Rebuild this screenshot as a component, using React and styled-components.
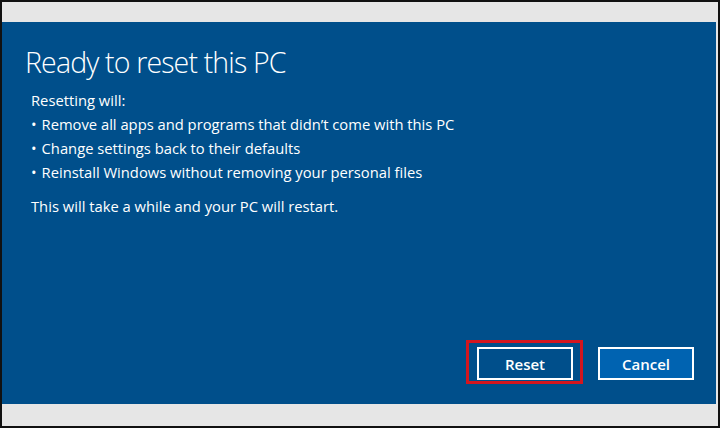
import React from 'react'
import styled, { createGlobalStyle } from 'styled-components'

const GlobalStyle = createGlobalStyle`
  html, body {
    margin: 0;
    padding: 0;
    background: #e6e6e6;
  }
  * {
    box-sizing: border-box;
  }
`

const Frame = styled.div`
  width: 720px;
  height: 428px;
  border: 2px solid #111;
  background: #e6e6e6;
  padding: 20px 2px 22px 0;
  font-family: 'Open Sans', 'Noto Sans', sans-serif;
`

const Dialog = styled.div`
  height: 100%;
  background: #004f8b;
  color: #fff;
  display: flex;
  flex-direction: column;
  justify-content: space-between;
  padding: 21px 22px 20px 23px;
`

const Title = styled.h1`
  margin: 0;
  font-size: 28.5px;
  font-weight: 300;
  letter-spacing: -0.85px;
  line-height: 38px;
`

const Body = styled.div`
  padding: 7px 0 0 6px;
  font-size: 14.75px;
  line-height: 24px;
`

const Line = styled.p`
  margin: 0;
`

const List = styled.ul`
  margin: 0;
  padding: 0;
  list-style: none;
`

const Item = styled.li`
  display: flex;
  gap: 5px;
  &::before {
    content: '•';
  }
`

const Note = styled.p`
  margin: 10px 0 0;
`

const Actions = styled.div`
  display: flex;
  justify-content: flex-end;
  align-items: flex-end;
  gap: 15px;
`

const Highlight = styled.div`
  border: 3px solid #d4161f;
  padding: 4px 7px 1px 8px;
`

const Button = styled.button`
  width: 96px;
  height: 33px;
  border: 2px solid #fff;
  background: ${(p) => (p.$primary ? '#004f8b' : '#0063b1')};
  color: #fff;
  font-family: 'Open Sans', 'Noto Sans', sans-serif;
  font-size: 15px;
  font-weight: 600;
  padding: 0;
  margin-bottom: ${(p) => (p.$primary ? '0' : '4px')};
  cursor: pointer;
`

const App = () => {
  return (
    <>
      <GlobalStyle />
      <Frame>
        <Dialog>
          <div>
            <Title>Ready to reset this PC</Title>
            <Body>
              <Line>Resetting will:</Line>
              <List>
                <Item>Remove all apps and programs that didn’t come with this PC</Item>
                <Item>Change settings back to their defaults</Item>
                <Item>Reinstall Windows without removing your personal files</Item>
              </List>
              <Note>This will take a while and your PC will restart.</Note>
            </Body>
          </div>
          <Actions>
            <Highlight>
              <Button $primary>Reset</Button>
            </Highlight>
            <Button>Cancel</Button>
          </Actions>
        </Dialog>
      </Frame>
    </>
  )
}

export default App
